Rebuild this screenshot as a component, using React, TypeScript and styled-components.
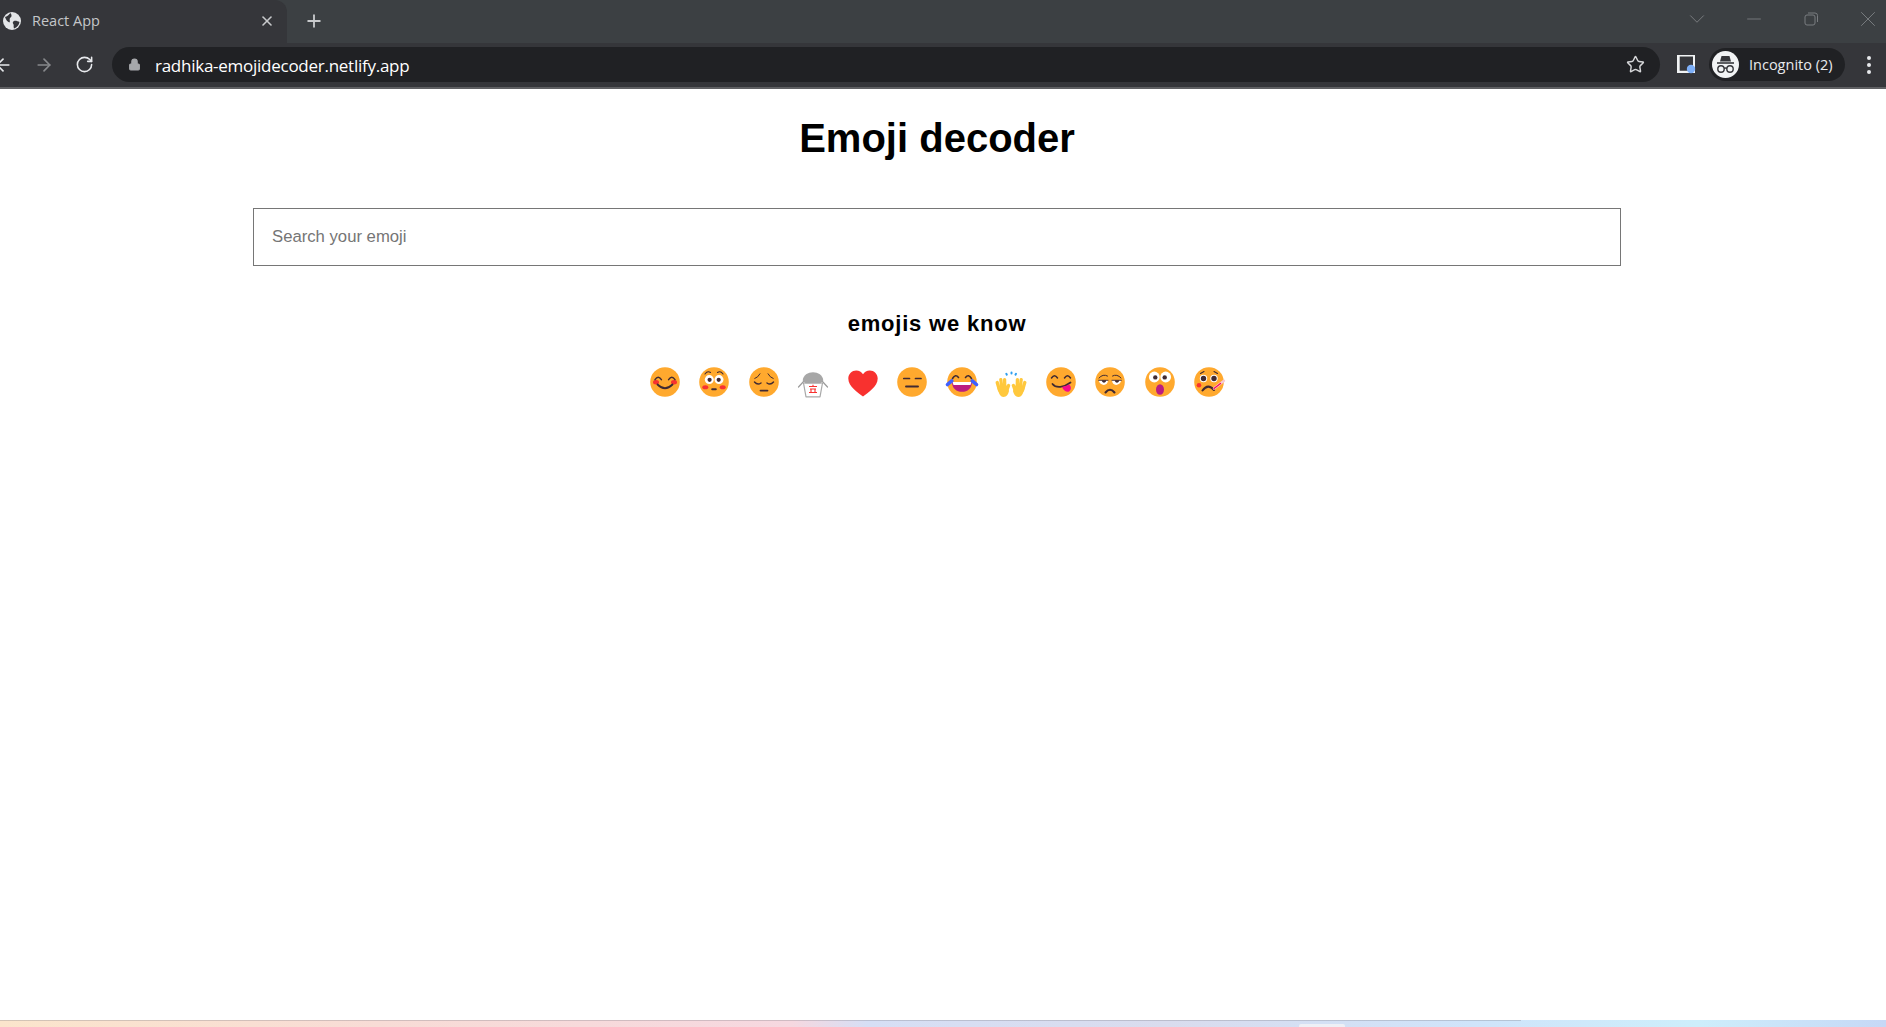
import React from 'react';
import styled, { createGlobalStyle } from 'styled-components';
import { ArrowLeft, ArrowRight, RotateCw, Star, X, Plus, ChevronDown, Minus, Lock } from 'lucide-react';

const GlobalStyle = createGlobalStyle`
    html, body {
        margin: 0;
        padding: 0;
        height: 100%;
        overflow: hidden;
        background: #fff;
        font-family: "Liberation Sans", Arial, sans-serif;
    }
    #root {
        height: 100%;
    }
`;

const Screen = styled.div`
    display: flex;
    flex-direction: column;
    height: 100vh;
`;

const TabStrip = styled.div`
    display: flex;
    align-items: center;
    height: 43px;
    background-color: #3c4043;
    flex-shrink: 0;
`;

const Tab = styled.div`
    display: flex;
    align-items: center;
    box-sizing: border-box;
    width: 287px;
    height: 43px;
    padding: 0 12px 2px 3px;
    background-color: #35363a;
    border-radius: 0 12px 0 0;
    color: #c4c7c9;
    font-family: "Open Sans", sans-serif;
    font-size: 14.5px;
`;

const TabTitle = styled.span`
    flex: 1;
    margin-left: 11px;
`;

const NewTab = styled.div`
    display: flex;
    margin-left: 17px;
    padding-bottom: 2px;
    color: #c8cacc;
`;

const WindowControls = styled.div`
    display: flex;
    align-items: center;
    margin-left: auto;
    margin-right: -10px;
    margin-top: -6px;
    color: #797c80;
`;

const WindowButton = styled.span`
    display: flex;
    justify-content: center;
    width: 57px;
`;

const Toolbar = styled.div`
    display: flex;
    align-items: center;
    height: 46px;
    padding-bottom: 1px;
    box-sizing: border-box;
    background-color: #35363a;
    border-bottom: 2px solid #5f6063;
    flex-shrink: 0;
`;

const NavButtons = styled.div`
    display: flex;
    align-items: center;
    gap: 21px;
    margin-left: -7px;
    width: 119px;
    box-sizing: border-box;
`;

const NavButton = styled.span<{ $dim?: boolean }>`
    display: flex;
    color: ${(p) => (p.$dim ? '#87898c' : '#e8eaed')};
`;

const Omnibox = styled.div`
    display: flex;
    align-items: center;
    flex: 0 0 1548px;
    height: 35px;
    box-sizing: border-box;
    padding: 0 15px 0 16px;
    border-radius: 18px;
    background-color: #202124;
    color: #fff;
`;

const UrlText = styled.span`
    flex: 1;
    margin-left: 14px;
    padding-top: 1px;
    font-family: "Open Sans", sans-serif;
    font-size: 17px;
    letter-spacing: -0.26px;
`;

const ExtensionIcon = styled.svg`
    width: 19px;
    height: 19px;
    margin-left: 17px;
    flex-shrink: 0;
`;

const ProfilePill = styled.div`
    display: flex;
    align-items: center;
    box-sizing: border-box;
    width: 136px;
    height: 33px;
    margin-left: 13px;
    padding-left: 3px;
    border-radius: 17px;
    background-color: #202124;
    color: #e8eaed;
    font-family: "Open Sans", sans-serif;
    font-size: 14.5px;
`;

const ProfileName = styled.span`
    margin-left: 10px;
`;

const MenuDots = styled.div`
    display: flex;
    flex-direction: column;
    gap: 3px;
    margin-left: 22px;
`;

const MenuDot = styled.span`
    width: 4px;
    height: 4px;
    border-radius: 50%;
    background-color: #e8eaed;
`;

const Page = styled.main`
    flex: 1;
    display: flex;
    flex-direction: column;
    align-items: center;
    padding-right: 12px;
    background-color: #fff;
`;

const Title = styled.h1`
    margin: 26px 0 0;
    font-size: 40px;
    line-height: 46px;
    font-weight: 700;
    color: #000;
`;

const SearchInput = styled.input`
    display: block;
    box-sizing: border-box;
    width: 1368px;
    height: 58px;
    margin-top: 47px;
    padding: 0 18px;
    border: 1px solid #767676;
    border-radius: 0;
    outline: none;
    font-family: "Liberation Sans", Arial, sans-serif;
    font-size: 16.7px;
    color: #000;
    &::placeholder {
        color: #757575;
    }
`;

const Subtitle = styled.h2`
    margin: 45px 0 0;
    font-size: 22px;
    line-height: 26px;
    font-weight: 700;
    color: #000;
    letter-spacing: 0.8px;
`;

const EmojiRow = styled.div`
    display: flex;
    margin-top: 29px;
`;

const EmojiCell = styled.span`
    display: flex;
    justify-content: center;
    width: 49.5px;
    height: 32px;
`;

const EmojiSvg = styled.svg`
    width: 30px;
    height: 30px;
    margin-top: 1px;
    overflow: visible;
`;

const TaskbarPeek = styled.div`
    position: relative;
    height: 7px;
    flex-shrink: 0;
    background: linear-gradient(90deg, #fbe5cc 0%, #f8dcd6 20%, #f6d8e0 42%, #d6dff5 46%, #d9dcee 62%, #cfe4fa 78%, #cdeefb 90%, #c6d8f6 100%);
`;

const TaskbarEdge = styled.div`
    width: 1521px;
    height: 1px;
    background-color: rgba(120, 120, 130, 0.3);
`;

const TaskbarGlint = styled.div`
    position: absolute;
    left: 1299px;
    top: 4px;
    width: 46px;
    height: 3px;
    border-radius: 2px 2px 0 0;
    background-color: #eef0f6;
`;

const ORANGE = '#ffa92e';
const DARK = '#402a32';
const RED = '#f8312f';
const YELLOW = '#ffc83d';

const Face: React.FC<{ children: React.ReactNode }> = ({ children }) => (
    <EmojiSvg viewBox="0 0 30 30" fill="none" strokeLinecap="round">
        <circle cx="15" cy="15" r="14.8" fill={ORANGE} />
        {children}
    </EmojiSvg>
);

const Plain: React.FC<{ children: React.ReactNode }> = ({ children }) => (
    <EmojiSvg viewBox="0 0 30 30" fill="none" strokeLinecap="round">
        {children}
    </EmojiSvg>
);

const emojis: { name: string; art: React.ReactNode }[] = [
    {
        name: 'smiling',
        art: (
            <Face>
                <ellipse cx="6" cy="15.3" rx="3" ry="2.2" fill={RED} />
                <ellipse cx="24" cy="15.3" rx="3" ry="2.2" fill={RED} />
                <path d="M5 12.6 Q8.2 8 11.4 12.6 M18.6 12.6 Q21.8 8 25 12.6" stroke={DARK} strokeWidth="1.5" />
                <path d="M7.5 17.5 Q15 25 22.5 17.5" stroke={DARK} strokeWidth="1.8" />
            </Face>
        ),
    },
    {
        name: 'flushed',
        art: (
            <Face>
                <circle cx="10.3" cy="12.6" r="4.5" fill="#fff" />
                <circle cx="20" cy="12.6" r="4.5" fill="#fff" />
                <circle cx="10.6" cy="12.8" r="2.1" fill={DARK} />
                <circle cx="19.7" cy="12.8" r="2.1" fill={DARK} />
                <path d="M6 7 Q8.5 3.5 11.5 5.5 M18.5 5.5 Q21.5 3.5 24 7" stroke={DARK} strokeWidth="1.1" />
                <ellipse cx="6.3" cy="20.3" rx="3" ry="2" fill={RED} />
                <ellipse cx="23.7" cy="20.3" rx="3" ry="2" fill={RED} />
                <path d="M13.2 22.2 H16.8" stroke={DARK} strokeWidth="2" />
            </Face>
        ),
    },
    {
        name: 'pensive',
        art: (
            <Face>
                <path d="M5.8 11.5 Q9 10.5 11 6.8 M19 6.8 Q21 10.5 24.2 11.5" stroke={DARK} strokeWidth="1" />
                <path d="M5.5 15 Q8.5 18.5 12 16 M18 16 Q21.5 18.5 24.5 15" stroke={DARK} strokeWidth="1.4" />
                <path d="M11.5 23.6 H18.5" stroke={DARK} strokeWidth="1.8" />
            </Face>
        ),
    },
    {
        name: 'takeout',
        art: (
            <Plain>
                <path d="M0.5 20 L6 14 M29.5 20 L24 14" stroke="#9b9b9b" strokeWidth="1.2" />
                <path d="M5.5 16 H24.5 L22 29.8 H8 Z" fill="#fff" stroke="#a9a9a9" strokeWidth="1.2" strokeLinejoin="round" />
                <path d="M4.7 13.5 C5.5 2.5 24.5 2.5 25.3 13.5 L22.5 16.5 H7.5 Z" fill="#a7a7a7" />
                <path d="M11 19.5 H19 M12 22 H18 M11 25.5 H19 M13 22 V25.5 M17 22 V25.5 M15 17.8 V19.5" stroke={RED} strokeWidth="1.1" strokeLinecap="butt" />
            </Plain>
        ),
    },
    {
        name: 'heart',
        art: (
            <Plain>
                <path d="M15 29.5 C10 25.5 0.3 19.5 0.3 11.5 C0.3 7 4 3.5 8.2 3.5 C11.2 3.5 13.6 5 15 7.2 C16.4 5 18.8 3.5 21.8 3.5 C26 3.5 29.7 7 29.7 11.5 C29.7 19.5 20 25.5 15 29.5 Z" fill={RED} />
            </Plain>
        ),
    },
    {
        name: 'expressionless',
        art: (
            <Face>
                <path d="M6.8 11.5 H12.5 M18.5 11.5 H24" stroke={DARK} strokeWidth="1.7" />
                <path d="M9 19.5 H21" stroke={DARK} strokeWidth="1.9" />
            </Face>
        ),
    },
    {
        name: 'joy',
        art: (
            <Face>
                <path d="M5.5 11.5 Q8.5 6.5 11.5 10.5 M18.5 10.5 Q21.5 6.5 24.5 11.5" stroke={DARK} strokeWidth="1.6" />
                <path d="M5 15 H25 C25 21.5 20.5 24.8 15 24.8 C9.5 24.8 5 21.5 5 15 Z" fill="#bb1d80" />
                <path d="M5.5 15 H24.5 L23.5 18 H6.5 Z" fill="#fff" />
                <path d="M4.8 13.8 L0.5 17.5 M25.2 13.8 L29.5 17.5" stroke="#3f5fff" strokeWidth="3.6" />
            </Face>
        ),
    },
    {
        name: 'hands',
        art: (
            <Plain>
                <g stroke={YELLOW} strokeWidth="3.3">
                    <path d="M1.2 15.5 L3.4 23 M4.8 12.6 L6 22 M8.6 12.6 L8.8 22 M12.6 18.5 L10.8 23.5" />
                    <path d="M28.8 15.5 L26.6 23 M25.2 12.6 L24 22 M21.4 12.6 L21.2 22 M17.4 18.5 L19.2 23.5" />
                </g>
                <path d="M1.2 20 L11 18.5 L13 24 C12.4 27 10.5 30 7.5 30 C4 30 2.2 25 1.2 20 Z" fill={YELLOW} />
                <path d="M28.8 20 L19 18.5 L17 24 C17.6 27 19.5 30 22.5 30 C26 30 27.8 25 28.8 20 Z" fill={YELLOW} />
                <path d="M10.3 6.8 L10.8 7.6 M15.5 5.4 L15.5 6.4 M20 6.8 L19.5 7.6" stroke="#2f9ff0" strokeWidth="2" />
            </Plain>
        ),
    },
    {
        name: 'savouring',
        art: (
            <Face>
                <path d="M5.5 11 Q8.5 6.5 11.5 11 M18.5 11 Q21.5 6.5 24.5 11" stroke={DARK} strokeWidth="1.5" />
                <path d="M6.5 17 C10 21.5 18 20.5 24.5 15.5" stroke={DARK} strokeWidth="1.8" />
                <path d="M16 20 C18 19.5 21 18.5 23 17.5 C25.5 19 25.5 23 23 24.5 C20.5 25.5 17.5 23.5 16 20 Z" fill="#f70a8d" />
            </Face>
        ),
    },
    {
        name: 'unamused',
        art: (
            <Face>
                <path d="M4 11 Q8 6.5 12.5 9 M17.5 9 Q22 6.5 26 11" stroke={DARK} strokeWidth="1" />
                <path d="M3.6 13.3 H13 C13 19.5 5 19.5 3.6 13.3 Z M17 13.3 H26.4 C25 19.5 17 19.5 17 13.3 Z" fill="#fff" />
                <path d="M6.8 13.3 H11.2 C11.2 16.4 6.8 16.4 6.8 13.3 Z M19.8 13.3 H24.2 C24.2 16.4 19.8 16.4 19.8 13.3 Z" fill={DARK} />
                <path d="M3.6 13.3 H13 M17 13.3 H26.4" stroke={DARK} strokeWidth="0.9" />
                <path d="M10.5 25.5 Q15 20 19.5 25.5" stroke={DARK} strokeWidth="2.1" />
            </Face>
        ),
    },
    {
        name: 'astonished',
        art: (
            <Face>
                <circle cx="9.3" cy="10" r="5.4" fill="#fff" />
                <circle cx="20.7" cy="10" r="5.4" fill="#fff" />
                <circle cx="10.3" cy="10.4" r="2.2" fill={DARK} />
                <circle cx="19.7" cy="10.4" r="2.2" fill={DARK} />
                <ellipse cx="15" cy="22.5" rx="4" ry="5.3" fill="#bb1d80" />
            </Face>
        ),
    },
    {
        name: 'thermometer',
        art: (
            <Face>
                <path d="M6.5 6.5 L10 4.5 M20 4.5 L23.5 6.5" stroke={DARK} strokeWidth="1.1" />
                <circle cx="9.5" cy="11.5" r="3.7" fill="#fff" />
                <circle cx="20" cy="11.5" r="3.7" fill="#fff" />
                <circle cx="9.5" cy="11.5" r="2.7" fill={DARK} />
                <circle cx="20" cy="11.5" r="2.7" fill={DARK} />
                <circle cx="5" cy="18.3" r="2.3" fill={RED} />
                <path d="M8.5 23.5 Q14 16 20 23" stroke={DARK} strokeWidth="2.1" />
                <path d="M20 21.5 L30 13.8" stroke="#f8c8d4" strokeWidth="2.4" />
                <path d="M20 21.5 L26.5 16.5" stroke="#f70a5d" strokeWidth="1.3" />
            </Face>
        ),
    },
];

const App: React.FC = () => {
    return (
        <Screen>
            <GlobalStyle />
            <TabStrip>
                <Tab>
                    <svg width="18" height="18" viewBox="0 0 18 18">
                        <circle cx="9" cy="9" r="9" fill="#e4e6e8" />
                        <path d="M2 5 C5 4 6 2.5 7.5 1 C9 3 9 5 7 6 C6 7.5 7.5 9 6.5 10.5 C4.5 10 3 8 2 5 Z M11 9 C13 8.5 15 9.5 16.5 10 C16 13 14 15.5 11 16.5 C10 14.5 11.5 13 10 11.5 C9.5 10.5 10 9.5 11 9 Z" fill="#35363a" />
                    </svg>
                    <TabTitle>React App</TabTitle>
                    <X size={16} strokeWidth={2.4} color="#c8cacc" />
                </Tab>
                <NewTab>
                    <Plus size={20} strokeWidth={2.2} />
                </NewTab>
                <WindowControls>
                    <WindowButton><ChevronDown size={26} strokeWidth={0.9} /></WindowButton>
                    <WindowButton><Minus size={22} strokeWidth={1} /></WindowButton>
                    <WindowButton>
                        <svg width="18" height="18" viewBox="0 0 18 18" fill="none" stroke="currentColor" strokeWidth="1">
                            <rect x="3" y="5" width="10" height="10" rx="2" />
                            <path d="M6 3 H13 Q15.5 3 15.5 5.5 V12" />
                        </svg>
                    </WindowButton>
                    <WindowButton><X size={26} strokeWidth={0.9} /></WindowButton>
                </WindowControls>
            </TabStrip>
            <Toolbar>
                <NavButtons>
                    <NavButton><ArrowLeft size={20} /></NavButton>
                    <NavButton $dim><ArrowRight size={20} /></NavButton>
                    <NavButton><RotateCw size={19} /></NavButton>
                </NavButtons>
                <Omnibox>
                    <Lock size={13} color="#a6a8ab" fill="#a6a8ab" />
                    <UrlText>radhika-emojidecoder.netlify.app</UrlText>
                    <Star size={19} color="#d6d7d9" strokeWidth={1.8} />
                </Omnibox>
                <ExtensionIcon viewBox="0 0 19 19">
                    <path d="M0 0 H18 V18 H0 Z M2.7 1.6 V15.8 H16 V1.6 Z" fill="#f1f3f4" fillRule="evenodd" />
                    <circle cx="14" cy="14" r="4.2" fill="#7eb0f8" />
                </ExtensionIcon>
                <ProfilePill>
                    <svg width="27" height="27" viewBox="0 0 27 27">
                        <circle cx="13.5" cy="13.5" r="13.5" fill="#f1f3f4" />
                        <path d="M9.5 5 H17.5 L19 10.5 H8 Z" fill="#35363a" />
                        <path d="M5 11.2 H22 V12.8 H5 Z" fill="#35363a" />
                        <g fill="none" stroke="#35363a" strokeWidth="1.4">
                            <circle cx="9" cy="18" r="3.2" />
                            <circle cx="18" cy="18" r="3.2" />
                            <path d="M12 17.5 Q13.5 16.5 15 17.5" />
                        </g>
                    </svg>
                    <ProfileName>Incognito (2)</ProfileName>
                </ProfilePill>
                <MenuDots>
                    <MenuDot />
                    <MenuDot />
                    <MenuDot />
                </MenuDots>
            </Toolbar>
            <Page>
                <Title>Emoji decoder</Title>
                <SearchInput placeholder="Search your emoji" />
                <Subtitle>emojis we know</Subtitle>
                <EmojiRow>
                    {emojis.map((emoji) => (
                        <EmojiCell key={emoji.name} title={emoji.name}>
                            {emoji.art}
                        </EmojiCell>
                    ))}
                </EmojiRow>
            </Page>
            <TaskbarPeek>
                <TaskbarEdge />
                <TaskbarGlint />
            </TaskbarPeek>
        </Screen>
    );
};

export default App;
